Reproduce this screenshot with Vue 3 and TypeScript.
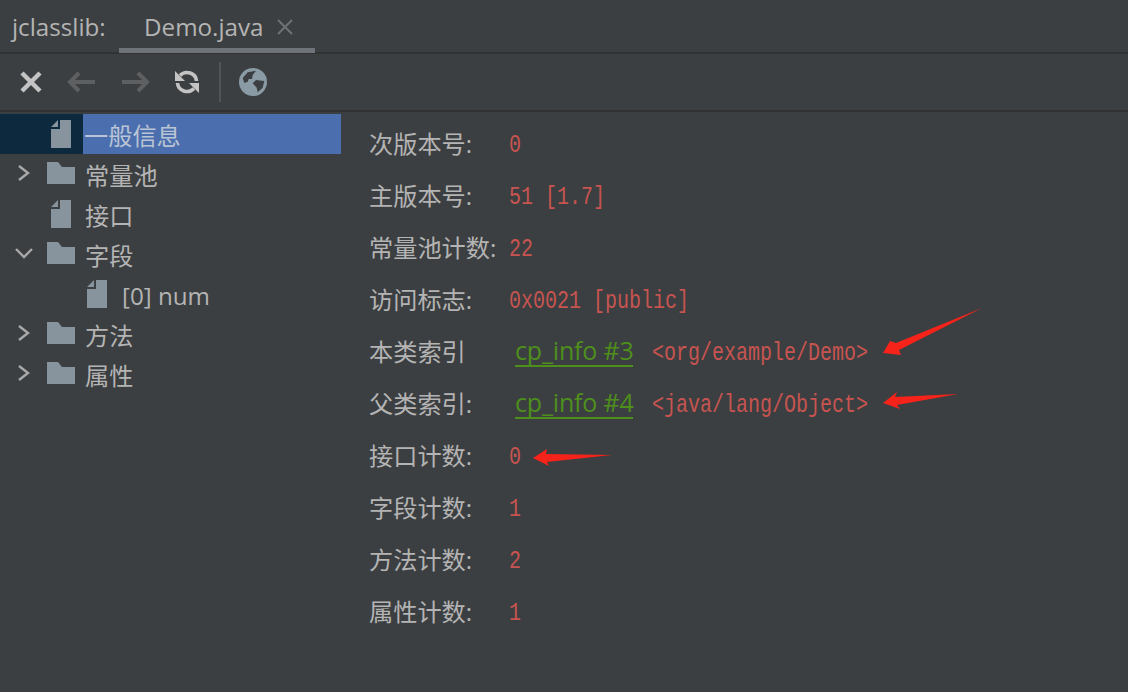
<script setup lang="ts">
interface TreeRow { label: string; kind: 'file' | 'folder'; chevron?: 'right' | 'down'; child?: boolean; selected?: boolean }
interface InfoRow { label: string; value?: string; link?: string; target?: string }

const tree: TreeRow[] = [
  { label: '一般信息', kind: 'file', selected: true },
  { label: '常量池', kind: 'folder', chevron: 'right' },
  { label: '接口', kind: 'file' },
  { label: '字段', kind: 'folder', chevron: 'down' },
  { label: '[0] num', kind: 'file', child: true },
  { label: '方法', kind: 'folder', chevron: 'right' },
  { label: '属性', kind: 'folder', chevron: 'right' },
]

const info: InfoRow[] = [
  { label: '次版本号:', value: '0' },
  { label: '主版本号:', value: '51 [1.7]' },
  { label: '常量池计数:', value: '22' },
  { label: '访问标志:', value: '0x0021 [public]' },
  { label: '本类索引', link: 'cp_info #3', target: '<org/example/Demo>' },
  { label: '父类索引:', link: 'cp_info #4', target: '<java/lang/Object>' },
  { label: '接口计数:', value: '0' },
  { label: '字段计数:', value: '1' },
  { label: '方法计数:', value: '2' },
  { label: '属性计数:', value: '1' },
]
</script>

<template>
  <div class="app">
    <header class="tabs">
      <span class="title">jclasslib:</span>
      <div class="tab">
        <span>Demo.java</span>
        <svg class="tab-close" width="16" height="16" viewBox="0 0 16 16"><path d="M1 1 15 15M15 1 1 15" /></svg>
      </div>
    </header>

    <nav class="toolbar">
      <svg class="tool" width="24" height="24" viewBox="0 0 24 24"><path class="t-close" d="M3 3 21 21M21 3 3 21" /></svg>
      <svg class="tool" width="30" height="24" viewBox="0 0 30 24"><path class="t-dim" d="M28 12H3M12 3 3 12l9 9" /></svg>
      <svg class="tool" width="30" height="24" viewBox="0 0 30 24"><path class="t-dim" d="M2 12H27M18 3l9 9-9 9" /></svg>
      <svg class="tool" width="24" height="24" viewBox="0 0 24 24">
        <path class="t-sync" d="M21.5 11A9.5 9 0 0 0 5 5.5M2.5 13A9.5 9 0 0 0 19 18.5" />
        <path class="t-fill" d="M0 1V11H10zM24 23V13H14z" />
      </svg>
      <span class="sep"></span>
      <svg class="tool" width="28" height="28" viewBox="0 0 28 28">
        <circle cx="14" cy="14" r="14" fill="#8a9ba6" />
        <path d="M3.7 10 8.7 4.3 17 2.7 13.7 7 13 11 9.7 11 8.7 13.7 5.3 15zM13.7 15.3 17 12 25.3 13 23.7 19.7 18.7 24.3 17.7 19.7z" fill="#3c3f41" />
      </svg>
    </nav>

    <main class="body">
      <aside class="tree">
        <div v-for="row in tree" :key="row.label" class="row" :class="{ selected: row.selected }">
          <span class="gutter" :class="{ child: row.child }">
            <svg v-if="row.chevron === 'right'" class="chev" width="14" height="18" viewBox="0 0 14 18"><path d="M2 2 11 9 2 16" /></svg>
            <svg v-else-if="row.chevron === 'down'" class="chev" width="18" height="14" viewBox="0 0 18 14"><path d="M1 3 9 11 17 3" /></svg>
            <svg v-if="row.kind === 'folder'" class="node folder" width="28" height="22" viewBox="0 0 28 22"><path d="M0 0H11L15 5H28V22H0z" /></svg>
            <svg v-else class="node file" width="20" height="28" viewBox="0 0 20 28"><path d="M9 0H20V28H0V9H9zM0 7 7 0V7z" /></svg>
          </span>
          <span class="label">{{ row.label }}</span>
        </div>
      </aside>

      <section class="info">
        <div v-for="row in info" :key="row.label" class="info-row">
          <span class="info-label">{{ row.label }}</span>
          <span v-if="row.value" class="mono">{{ row.value }}</span>
          <template v-else>
            <a class="link">{{ row.link }}</a>
            <span class="mono target">{{ row.target }}</span>
          </template>
        </div>
      </section>
    </main>

    <svg class="marks" width="1128" height="692" viewBox="0 0 1128 692">
      <path d="M982 308 896 343 890 341 883 353 901 355 899 350z" />
      <path d="M958 394 895 397 897 392 883 403 900 409 897 405z" />
      <path d="M612 455 546 454 547 449 533 458 549 466 547 462z" />
    </svg>
  </div>
</template>

<style>
html, body { margin: 0; background: #3c3f41; }
</style>

<style scoped>
.app {
  position: relative;
  width: 1128px;
  height: 692px;
  overflow: hidden;
  display: flex;
  flex-direction: column;
  background: #3c3f41;
  color: #b4b4b4;
  font: 24.2px/40px "Open Sans", "Noto Sans CJK SC", sans-serif;
}
.tabs {
  height: 52px;
  flex: none;
  display: flex;
  align-items: stretch;
  padding-left: 12px;
  border-bottom: 2px solid #323232;
}
.title { width: 107px; line-height: 54px; }
.tab {
  width: 196px;
  box-sizing: border-box;
  padding-left: 25px;
  display: flex;
  align-items: center;
  gap: 13px;
  line-height: 54px;
  box-shadow: inset 0 -5px 0 #6e7279;
  margin-bottom: -1px;
}
.tab-close { stroke: #6e7175; stroke-width: 2; fill: none; }

.toolbar {
  height: 56px;
  flex: none;
  display: flex;
  align-items: center;
  border-bottom: 2px solid #323232;
  padding-left: 19px;
}
.tool { flex: none; fill: none; }
.t-close { stroke: #c4c4c4; stroke-width: 4.5; }
.t-dim { stroke: #5d5f60; stroke-width: 4; }
.t-sync { stroke: #c4c4c4; stroke-width: 3.6; fill: none; }
.t-fill { fill: #c4c4c4; }
.toolbar .tool:nth-child(2) { margin-left: 24px; }
.toolbar .tool:nth-child(3) { margin-left: 23px; }
.toolbar .tool:nth-child(4) { margin-left: 25px; }
.sep { width: 2px; height: 40px; background: #515355; margin-left: 20px; }
.toolbar .tool:nth-child(6) { margin-left: 18px; }

.body { flex: 1; display: flex; min-height: 0; }
.tree { width: 341px; flex: none; padding-top: 2px; }
.row { height: 40px; display: flex; align-items: stretch; }
.gutter { width: 85px; flex: none; position: relative; display: block; }
.gutter.child { width: 122px; }
.selected .gutter { width: 83px; background: #0d293e; }
.selected .label { flex: 1; background: #4b6eaf; padding-left: 1px; color: #b9c4d4; }
.label { white-space: nowrap; line-height: 43px; }
.chev { position: absolute; left: 17px; top: 10px; fill: none; stroke: #a8a8a8; stroke-width: 2.4; }
.row:nth-child(4) .chev { left: 15px; top: 12px; }
.node { position: absolute; fill: #87949d; }
.folder { left: 47px; top: 8px; }
.file { left: 51px; top: 6px; }
.child .file { left: 87px; }

.info { flex: 1; padding: 6px 0 0 28px; }
.info-row { height: 52px; display: flex; align-items: center; white-space: nowrap; }
.info-label { width: 140px; flex: none; }
.mono {
  display: inline-block;
  font: 20px/52px "Liberation Mono", monospace;
  color: #c75450;
  transform: translateY(2px) scaleY(1.25);
  transform-origin: 50% 50%;
}
.link {
  margin: 0 0 2px 6px;
  width: 118px;
  height: 30px;
  line-height: 30px;
  flex: none;
  font-size: 25px;
  letter-spacing: -0.15px;
  color: #4e8f1c;
  border-bottom: 2px solid #4e8f1c;
}
.target { margin-left: 19px; }
.marks { position: absolute; left: 0; top: 0; pointer-events: none; fill: #f5231a; }
</style>
